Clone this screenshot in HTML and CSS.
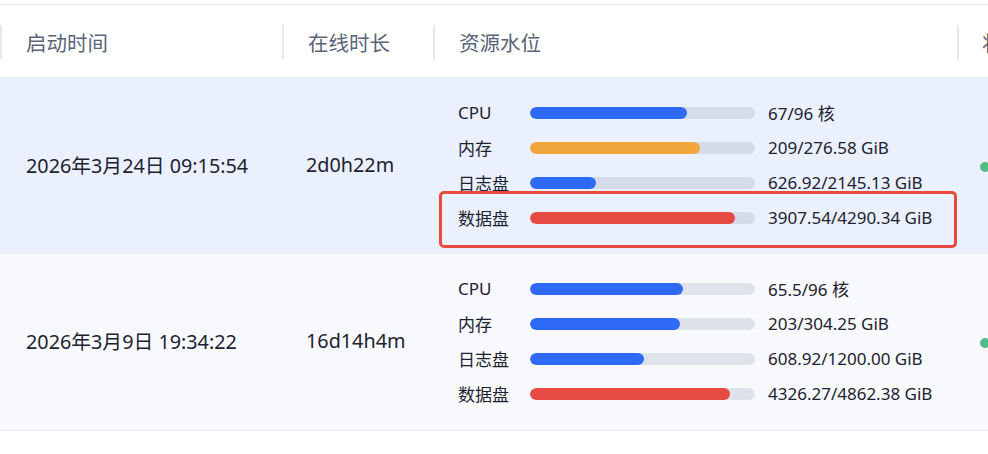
FILE: index.html
```html
<!DOCTYPE html>
<html lang="zh-CN">
<head>
<meta charset="utf-8">
<link rel="stylesheet" href="styles.css">
</head>
<body>
<div class="table">
  <div class="row head">
    <div class="hcell">启动时间</div>
    <div class="hcell">在线时长</div>
    <div class="hcell">资源水位</div>
    <div class="hcell">状态</div>
  </div>
  <div class="row body r1">
    <div class="cell">2026年3月24日 09:15:54</div>
    <div class="cell dur">2d0h22m</div>
    <div class="cell res">
      <div class="item"><span class="lbl">CPU</span><span class="track"><span class="fill blue" style="width:69.8%"></span></span><span class="val">67/96 核</span></div>
      <div class="item"><span class="lbl">内存</span><span class="track"><span class="fill orange" style="width:75.6%"></span></span><span class="val">209/276.58 GiB</span></div>
      <div class="item"><span class="lbl">日志盘</span><span class="track"><span class="fill blue" style="width:29.2%"></span></span><span class="val">626.92/2145.13 GiB</span></div>
      <div class="item marked"><span class="lbl">数据盘</span><span class="track"><span class="fill red" style="width:91.1%"></span></span><span class="val">3907.54/4290.34 GiB</span></div>
    </div>
    <div class="cell status"><span class="dot"></span></div>
  </div>
  <div class="row body r2">
    <div class="cell">2026年3月9日 19:34:22</div>
    <div class="cell dur">16d14h4m</div>
    <div class="cell res">
      <div class="item"><span class="lbl">CPU</span><span class="track"><span class="fill blue" style="width:68.2%"></span></span><span class="val">65.5/96 核</span></div>
      <div class="item"><span class="lbl">内存</span><span class="track"><span class="fill blue" style="width:66.7%"></span></span><span class="val">203/304.25 GiB</span></div>
      <div class="item"><span class="lbl">日志盘</span><span class="track"><span class="fill blue" style="width:50.7%"></span></span><span class="val">608.92/1200.00 GiB</span></div>
      <div class="item"><span class="lbl">数据盘</span><span class="track"><span class="fill red" style="width:89%"></span></span><span class="val">4326.27/4862.38 GiB</span></div>
    </div>
    <div class="cell status"><span class="dot"></span></div>
  </div>
</div>
</body>
</html>
```
FILE: styles.css
```css
html, body {
  margin: 0;
  padding: 0;
  background: #ffffff;
  overflow: hidden;
}
body {
  font-family: "Noto Sans", "Noto Sans CJK SC", sans-serif;
  color: #1d2230;
  padding-top: 4px;
}
.table {
  width: 1010px;
  border-top: 1px solid #e3e8f0;
  border-bottom: 1px solid #e3e7ef;
}
.row {
  display: grid;
  grid-template-columns: 282px 151px 524px 1fr;
}
.head {
  height: 72px;
  border-bottom: 1px solid #e4e8ef;
  background: #fff;
}
.hcell {
  position: relative;
  display: flex;
  align-items: center;
  padding-left: 26px;
  padding-top: 1px;
  font-size: 20.5px;
  color: #5a6377;
  white-space: nowrap;
}
.hcell::before {
  content: "";
  position: absolute;
  left: 0;
  top: 20px;
  width: 2px;
  height: 34px;
  background: #e2e7f1;
}
.hcell:last-child {
  padding-left: 25px;
}
.body {
  height: 176px;
}
.r1 { background: #eaf0fe; }
.r2 { background: #f8f9fd; }
.cell {
  display: flex;
  align-items: center;
  padding-left: 26px;
  padding-bottom: 3px;
  font-size: 19.8px;
  white-space: nowrap;
}
.dur {
  padding-left: 24px;
}
.res {
  flex-direction: column;
  align-items: stretch;
  justify-content: center;
  padding-left: 25px;
  padding-bottom: 2px;
}
.item {
  position: relative;
  display: grid;
  grid-template-columns: 72px 225px auto;
  align-items: center;
  height: 35px;
  font-size: 17px;
}
.val {
  margin-left: 13px;
}
.track {
  display: block;
  height: 12px;
  border-radius: 6px;
  background: #d5dbe8;
  overflow: hidden;
}
.r2 .track { background: #dee2ea; }
.fill {
  display: block;
  height: 100%;
  border-radius: 6px;
}
.blue { background: #2e6af5; }
.orange { background: #f0a63d; }
.red { background: #e64b43; }
.marked::after {
  content: "";
  position: absolute;
  left: -19px;
  top: -9px;
  width: 512px;
  height: 51px;
  border: 3px solid #e84a40;
  border-radius: 5px;
}
.status {
  padding-left: 23px;
  padding-bottom: 0;
  padding-top: 2px;
}
.dot {
  width: 10px;
  height: 10px;
  border-radius: 50%;
  background: #52bd86;
}
```
